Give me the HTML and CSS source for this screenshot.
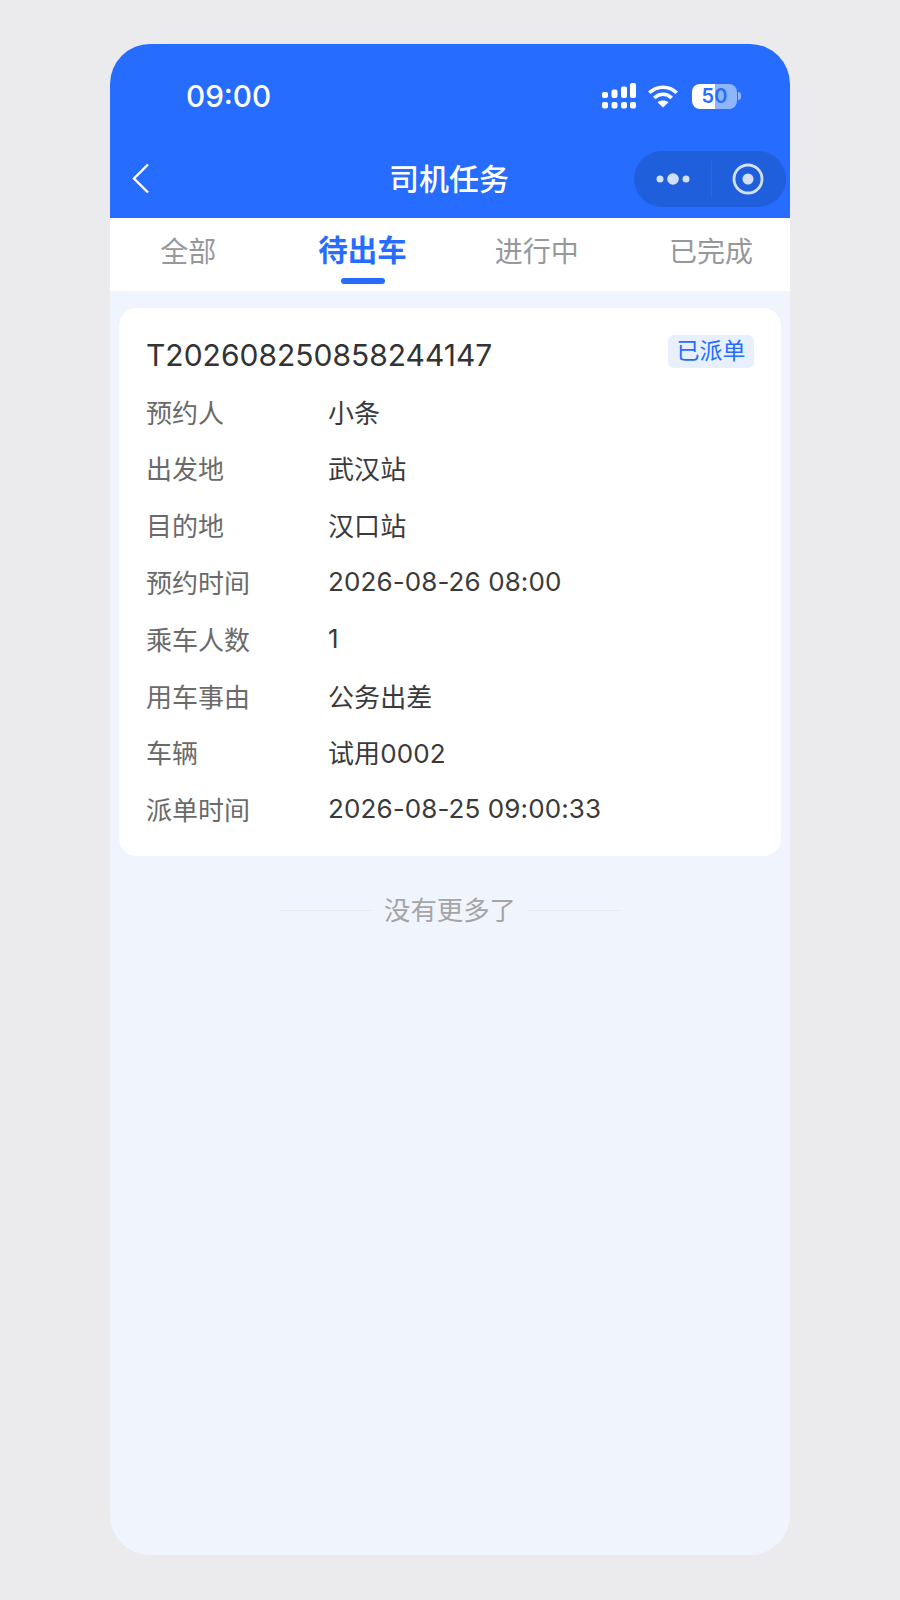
FILE: index.html
```html
<!DOCTYPE html>
<html lang="zh-CN">
<head>
    <meta charset="UTF-8">
    <meta name="viewport" content="width=device-width, initial-scale=1.0">
    <title>司机任务</title>
    <link rel="stylesheet" href="styles.css">
</head>
<body>

    <div class="phone">
        <header class="header">
            <!-- Status bar -->
            <div class="status-bar">
                <span class="clock">09:00</span>
                <div class="status-icons">
                    <svg class="signal" width="34" height="26" viewBox="0 0 34 26" fill="#fff">
                        <rect x="0" y="9" width="6" height="6" rx="2"/>
                        <rect x="9.500" y="6.500" width="6" height="8.500" rx="2"/>
                        <rect x="19" y="3.500" width="6" height="11.500" rx="2"/>
                        <rect x="28" y="0" width="6" height="15" rx="2"/>
                        <rect x="0" y="19" width="6" height="6.500" rx="2"/>
                        <rect x="9.500" y="19" width="6" height="6.500" rx="2"/>
                        <rect x="19" y="19" width="6" height="6.500" rx="2"/>
                        <rect x="28" y="19" width="6" height="6.500" rx="2"/>
                    </svg>
                    <svg class="wifi" width="30" height="24" viewBox="0 0 30 24" fill="none" stroke="#fff" stroke-width="3.600">
                        <path d="M1.300 8.800C9 1.300 21 1.300 28.700 8.800"/>
                        <path d="M6.300 14C11.300 9 18.700 9 23.700 14"/>
                        <path d="M9.500 18.200C12.500 15.800 17.500 15.800 20.500 18.200L15 23.500Z" fill="#fff" stroke="none"/>
                    </svg>
                    <div class="battery"><span class="battery-level">50</span><i class="battery-nub"></i></div>
                </div>
            </div>

            <!-- Nav bar -->
            <div class="nav-bar">
                <svg class="back" width="17" height="31" viewBox="0 0 17 31" fill="none" stroke="#fff" stroke-width="2.400">
                    <path d="M16 1.500 2 15.500 16 29.500"/>
                </svg>
                <h1 class="nav-title">司机任务</h1>
                <div class="capsule">
                    <svg width="34" height="14" viewBox="0 0 34 14" fill="#d4e0f9">
                        <circle cx="4" cy="7" r="3.500"/>
                        <circle cx="17" cy="7" r="5.800"/>
                        <circle cx="30" cy="7" r="3.500"/>
                    </svg>
                    <i class="capsule-line"></i>
                    <svg width="32" height="32" viewBox="0 0 32 32">
                        <circle cx="16" cy="16" r="14" fill="none" stroke="#d4e0f9" stroke-width="2.800"/>
                        <circle cx="16" cy="16" r="5.500" fill="#d4e0f9"/>
                    </svg>
                </div>
            </div>
        </header>

        <nav class="tabs">
            <div class="tab">全部</div>
            <div class="tab active">待出车</div>
            <div class="tab">进行中</div>
            <div class="tab">已完成</div>
        </nav>

        <main class="content">
            <section class="card">
                <div class="card-head">
                    <span class="order-no">T202608250858244147</span>
                    <span class="badge">已派单</span>
                </div>
                <div class="row"><span class="label">预约人</span><span class="value">小条</span></div>
                <div class="row"><span class="label">出发地</span><span class="value">武汉站</span></div>
                <div class="row"><span class="label">目的地</span><span class="value">汉口站</span></div>
                <div class="row"><span class="label">预约时间</span><span class="value">2026-08-26 08:00</span></div>
                <div class="row"><span class="label">乘车人数</span><span class="value">1</span></div>
                <div class="row"><span class="label">用车事由</span><span class="value">公务出差</span></div>
                <div class="row"><span class="label">车辆</span><span class="value">试用0002</span></div>
                <div class="row"><span class="label">派单时间</span><span class="value">2026-08-25 09:00:33</span></div>
            </section>

            <div class="no-more">
                <i class="no-more-line"></i>
                <span>没有更多了</span>
                <i class="no-more-line"></i>
            </div>
        </main>
    </div>

</body>
</html>
```

FILE: styles.css
```css
* {
    box-sizing: border-box;
}

body {
    margin: 0;
    padding: 44px 110px 45px;
    background-color: #ebebed;
    font-family: Inter, "Noto Sans CJK SC", sans-serif;
}

.phone {
    display: flex;
    flex-direction: column;
    height: 1511px;
    border-radius: 40px;
    overflow: hidden;
    background-color: #f0f4fc;
}

.header {
    height: 174px;
    background-color: #266dff;
    color: #fff;
}

.status-bar {
    display: flex;
    justify-content: space-between;
    align-items: center;
    height: 106px;
    padding: 0 53px 4px 76px;
}

.clock {
    margin-top: 2px;
    font-size: 29.700px;
    font-weight: 500;
}

.status-icons {
    display: flex;
    align-items: center;
    gap: 14px;
    margin-top: 2px;
}

.signal {
    display: block;
    margin-right: -2px;
}

.wifi {
    display: block;
}

.battery {
    position: relative;
    width: 45px;
    height: 25px;
    border-radius: 8px;
    background: linear-gradient(to right, #fff 50%, #8fb5ff 50%);
}

.battery-level {
    display: block;
    color: #266dff;
    font-size: 20px;
    font-weight: 600;
    line-height: 25px;
    text-align: center;
}

.battery-nub {
    position: absolute;
    top: 8px;
    right: -4px;
    width: 3px;
    height: 8px;
    border-radius: 0 3px 3px 0;
    background-color: #8fb5ff;
}

.nav-bar {
    position: relative;
    display: flex;
    justify-content: space-between;
    align-items: center;
    height: 68px;
    padding: 0 4px 11px 22px;
}

.back {
    margin-top: -1px;
}

.nav-title {
    position: absolute;
    left: -1px;
    right: 1px;
    top: 7px;
    margin: 0;
    font-size: 30px;
    font-weight: 500;
    line-height: 44px;
    text-align: center;
}

.capsule {
    display: flex;
    align-items: center;
    width: 152px;
    height: 56px;
    padding: 0 22px 0 22px;
    justify-content: space-between;
    border-radius: 28px;
    background-color: #1f5fdb;
}

.capsule-line {
    width: 1px;
    height: 36px;
    background-color: #2b68e0;
}

.tabs {
    display: grid;
    grid-template-columns: repeat(4, 174.300px);
    height: 73px;
    margin-left: -9px;
    background-color: #fff;
    overflow: hidden;
}

.tab {
    position: relative;
    padding-top: 14px;
    color: #96989c;
    font-size: 28px;
    line-height: 40px;
    text-align: center;
}

.tab.active {
    padding-top: 12px;
    color: #266dff;
    font-size: 29.500px;
    font-weight: 700;
}

.tab.active::after {
    content: "";
    position: absolute;
    left: 50%;
    bottom: 7px;
    width: 44px;
    height: 6px;
    margin-left: -21px;
    border-radius: 3px;
    background-color: #266dff;
}

.content {
    flex: 1;
    padding: 17px 9px 0;
}

.card {
    height: 548px;
    padding: 24px 27px 0;
    border-radius: 18px;
    background-color: #fff;
}

.card-head {
    display: flex;
    justify-content: space-between;
    align-items: flex-start;
    height: 50.800px;
    padding-top: 1px;
}

.order-no {
    color: #333;
    font-size: 30px;
    font-weight: 400;
    line-height: 44px;
}

.badge {
    margin-top: 2px;
    padding: 0 8.500px;
    border-radius: 6px;
    background-color: #e8f0ff;
    color: #266dff;
    font-size: 23px;
    line-height: 33px;
}

.row {
    display: flex;
    height: 56.800px;
    align-items: center;
    font-size: 26px;
}

.label {
    width: 182px;
    color: #6a6a6a;
}

.value {
    color: #3a3a3a;
    letter-spacing: 0.100px;
}

.no-more {
    display: flex;
    justify-content: center;
    align-items: center;
    gap: 12px;
    margin-top: 35px;
    color: #a5a5a5;
    font-size: 26.400px;
    line-height: 38px;
}

.no-more-line {
    width: 93px;
    height: 1px;
    background-color: #e9ebee;
}
```
